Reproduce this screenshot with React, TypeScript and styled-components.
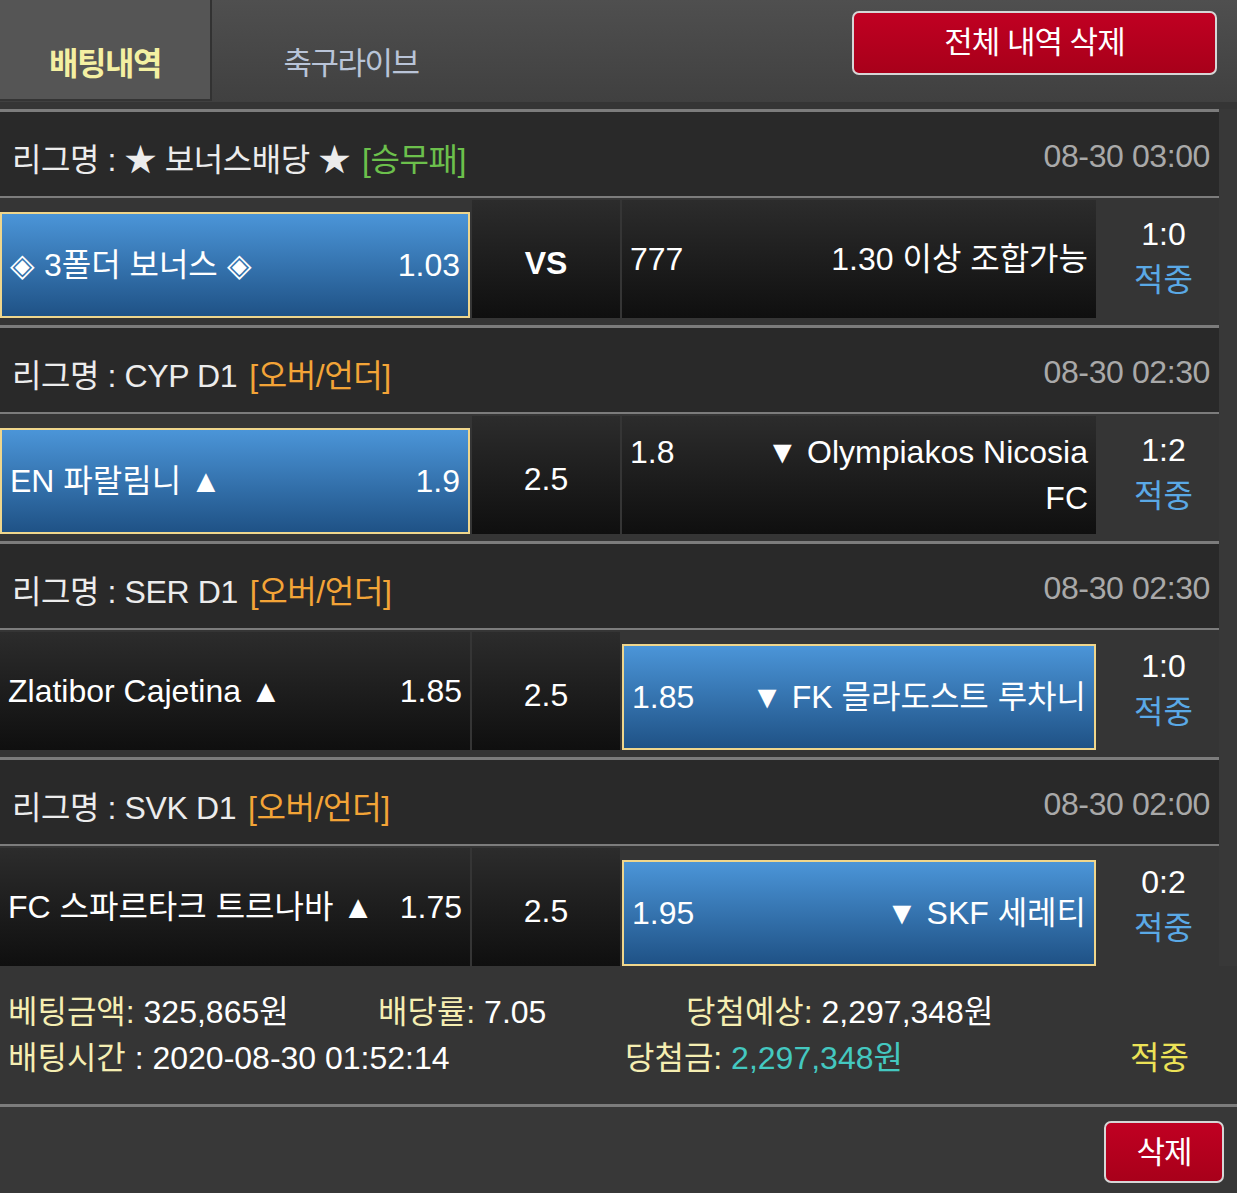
import styled, { createGlobalStyle } from 'styled-components';

const GlobalStyle = createGlobalStyle`
  html, body {
    margin: 0;
    padding: 0;
    background: #383838;
  }
  body {
    font-family: "Liberation Sans", "Noto Sans CJK KR", sans-serif;
    color: #f2f2f2;
  }
`

interface Side {
  name: string;
  odds: string;
  picked?: boolean;
}

interface Game {
  league: string;
  tag: string;
  tagColor: string;
  date: string;
  home: Side;
  middle: string;
  middleBold?: boolean;
  away: Side;
  score: string;
}

const games: Game[] = [
  {
    league: '★ 보너스배당 ★',
    tag: '[승무패]',
    tagColor: '#6cc04c',
    date: '08-30 03:00',
    home: { name: '◈ 3폴더 보너스 ◈', odds: '1.03', picked: true },
    middle: 'VS',
    middleBold: true,
    away: { name: '1.30 이상 조합가능', odds: '777' },
    score: '1:0',
  },
  {
    league: 'CYP D1',
    tag: '[오버/언더]',
    tagColor: '#f3a437',
    date: '08-30 02:30',
    home: { name: 'EN 파랄림니 ▲', odds: '1.9', picked: true },
    middle: '2.5',
    away: { name: '▼ Olympiakos Nicosia FC', odds: '1.8' },
    score: '1:2',
  },
  {
    league: 'SER D1',
    tag: '[오버/언더]',
    tagColor: '#f3a437',
    date: '08-30 02:30',
    home: { name: 'Zlatibor Cajetina ▲', odds: '1.85' },
    middle: '2.5',
    away: { name: '▼ FK 믈라도스트 루차니', odds: '1.85', picked: true },
    score: '1:0',
  },
  {
    league: 'SVK D1',
    tag: '[오버/언더]',
    tagColor: '#f3a437',
    date: '08-30 02:00',
    home: { name: 'FC 스파르타크 트르나바 ▲', odds: '1.75' },
    middle: '2.5',
    away: { name: '▼ SKF 세레티', odds: '1.95', picked: true },
    score: '0:2',
  },
];

const Page = styled.div`
  width: 1237px;
  min-height: 1193px;
  background: #383838;
  overflow: hidden;
`

const TopBar = styled.div`
  display: flex;
  align-items: flex-start;
  height: 102px;
  background: linear-gradient(#4f4f4f, #404040);
  border-bottom: 7px solid #353535;
`

const Tab = styled.div<{ $active?: boolean }>`
  width: ${p => (p.$active ? '212px' : '278px')};
  height: 101px;
  box-sizing: border-box;
  padding-top: 44px;
  text-align: center;
  font-size: ${p => (p.$active ? '32px' : '31px')};
  font-weight: ${p => (p.$active ? 700 : 400)};
  letter-spacing: -1.5px;
  line-height: 40px;
  color: ${p => (p.$active ? '#f4f0a2' : '#b9c4d8')};
  background: ${p => (p.$active ? '#555555' : 'transparent')};
  border-right: ${p => (p.$active ? '2px solid #323232' : 'none')};
  border-bottom: ${p => (p.$active ? '2px solid #343434' : 'none')};
`

const RedButton = styled.button<{ $wide?: boolean }>`
  width: ${p => (p.$wide ? '365px' : '120px')};
  height: ${p => (p.$wide ? '64px' : '62px')};
  box-sizing: border-box;
  padding: 0 0 ${p => (p.$wide ? '8px' : '6px')};
  border: 2px solid #d6d6d6;
  border-radius: 7px;
  background: linear-gradient(#c00022, #a8001a);
  color: #fff;
  font-family: "Liberation Sans", "Noto Sans CJK KR", sans-serif;
  font-size: 31px;
  letter-spacing: -1px;
  cursor: pointer;
`

const TopAction = styled.div`
  margin-left: auto;
  margin-right: 20px;
  margin-top: 11px;
`

const List = styled.div`
  width: 1219px;
`

const LeagueRow = styled.div`
  display: flex;
  align-items: center;
  height: 84px;
  padding: 0 9px 0 12px;
  border-top: 3px solid #7c7c7c;
  background: #292929;
  font-size: 32px;
  letter-spacing: -0.4px;
  color: #ececec;

  & > span {
    padding-top: 5px;
  }
`

const LeagueName = styled.span``

const Tag = styled.span<{ $color: string }>`
  margin-left: 12px;
  color: ${p => p.$color};
`

const DateText = styled.span`
  margin-left: auto;
  color: #a9a9a9;
`

const MatchRow = styled.div<{ $last?: boolean }>`
  display: flex;
  gap: 2px;
  padding: 2px 0 ${p => (p.$last ? '0' : '7px')};
  border-top: 2px solid #7c7c7c;
  background: #353535;
  font-size: 32px;
`

const Cell = styled.div<{ $width: number; $picked?: boolean }>`
  width: ${p => p.$width}px;
  height: ${p => (p.$picked ? '106px' : '118px')};
  margin-top: ${p => (p.$picked ? '12px' : '0')};
  box-sizing: border-box;
  display: flex;
  align-items: center;
  padding: 0 8px 0 8px;
  background: ${p =>
    p.$picked
      ? 'linear-gradient(#4b95d8, #1f5286)'
      : 'linear-gradient(#2c2c2c, #0f0f0f)'};
  border: ${p => (p.$picked ? '2px solid #efd68c' : 'none')};
  color: #fff;
`

const Inner = styled.div`
  display: flex;
  align-items: flex-start;
  justify-content: space-between;
  width: 100%;
  line-height: 46px;
`

const TeamName = styled.span`
  max-width: 345px;
  text-align: right;
`

const Middle = styled.div<{ $bold?: boolean }>`
  width: 148px;
  height: 118px;
  display: flex;
  align-items: center;
  justify-content: center;
  padding-top: 8px;
  box-sizing: border-box;
  background: linear-gradient(#2c2c2c, #0f0f0f);
  font-weight: ${p => (p.$bold ? 700 : 400)};
  color: #fff;
`

const Result = styled.div`
  flex: 1;
  display: flex;
  flex-direction: column;
  align-items: center;
  justify-content: center;
  padding: 0 0 4px 10px;
  line-height: 46px;
  color: #fff;
`

const Hit = styled.span<{ $color?: string }>`
  color: ${p => p.$color || '#5aa9e6'};
`

const Summary = styled.div`
  display: grid;
  grid-template-columns: 370px 308px 1fr;
  padding: 23px 0 23px 8px;
  border-bottom: 3px solid #7c7c7c;
  background: #353535;
  font-size: 32px;
  line-height: 46px;
  color: #fff;
`

const SecondLine = styled.div`
  grid-column: 1 / -1;
  display: grid;
  grid-template-columns: 617px 505px 1fr;
`

const Label = styled.span`
  color: #f5eeb2;
`

const Money = styled.span`
  color: #44c8c0;
`

const BottomBar = styled.div`
  display: flex;
  justify-content: flex-end;
  padding: 14px 13px 0 0;
`

const SideCell = ({ side, width, reverse }: { side: Side; width: number; reverse?: boolean }) => (
  <Cell $width={width} $picked={side.picked}>
    <Inner>
      {reverse ? (
        <>
          <span>{side.odds}</span>
          <TeamName>{side.name}</TeamName>
        </>
      ) : (
        <>
          <span>{side.name}</span>
          <span>{side.odds}</span>
        </>
      )}
    </Inner>
  </Cell>
);

export default function App() {
  return (
    <Page>
      <GlobalStyle />
      <TopBar>
        <Tab $active>배팅내역</Tab>
        <Tab>축구라이브</Tab>
        <TopAction>
          <RedButton $wide>전체 내역 삭제</RedButton>
        </TopAction>
      </TopBar>

      <List>
        {games.map((g, i) => (
          <div key={g.date + i}>
            <LeagueRow>
              <LeagueName>리그명 : {g.league}</LeagueName>
              <Tag $color={g.tagColor}>{g.tag}</Tag>
              <DateText>{g.date}</DateText>
            </LeagueRow>
            <MatchRow $last={i === games.length - 1}>
              <SideCell side={g.home} width={470} />
              <Middle $bold={g.middleBold}>{g.middle}</Middle>
              <SideCell side={g.away} width={474} reverse />
              <Result>
                <span>{g.score}</span>
                <Hit>적중</Hit>
              </Result>
            </MatchRow>
          </div>
        ))}
      </List>

      <Summary>
        <span><Label>베팅금액:</Label> 325,865원</span>
        <span><Label>배당률:</Label> 7.05</span>
        <span><Label>당첨예상:</Label> 2,297,348원</span>
        <SecondLine>
          <span><Label>배팅시간</Label> : 2020-08-30 01:52:14</span>
          <span><Label>당첨금:</Label> <Money>2,297,348원</Money></span>
          <Hit $color="#ece257">적중</Hit>
        </SecondLine>
      </Summary>

      <BottomBar>
        <RedButton>삭제</RedButton>
      </BottomBar>
    </Page>
  );
}
